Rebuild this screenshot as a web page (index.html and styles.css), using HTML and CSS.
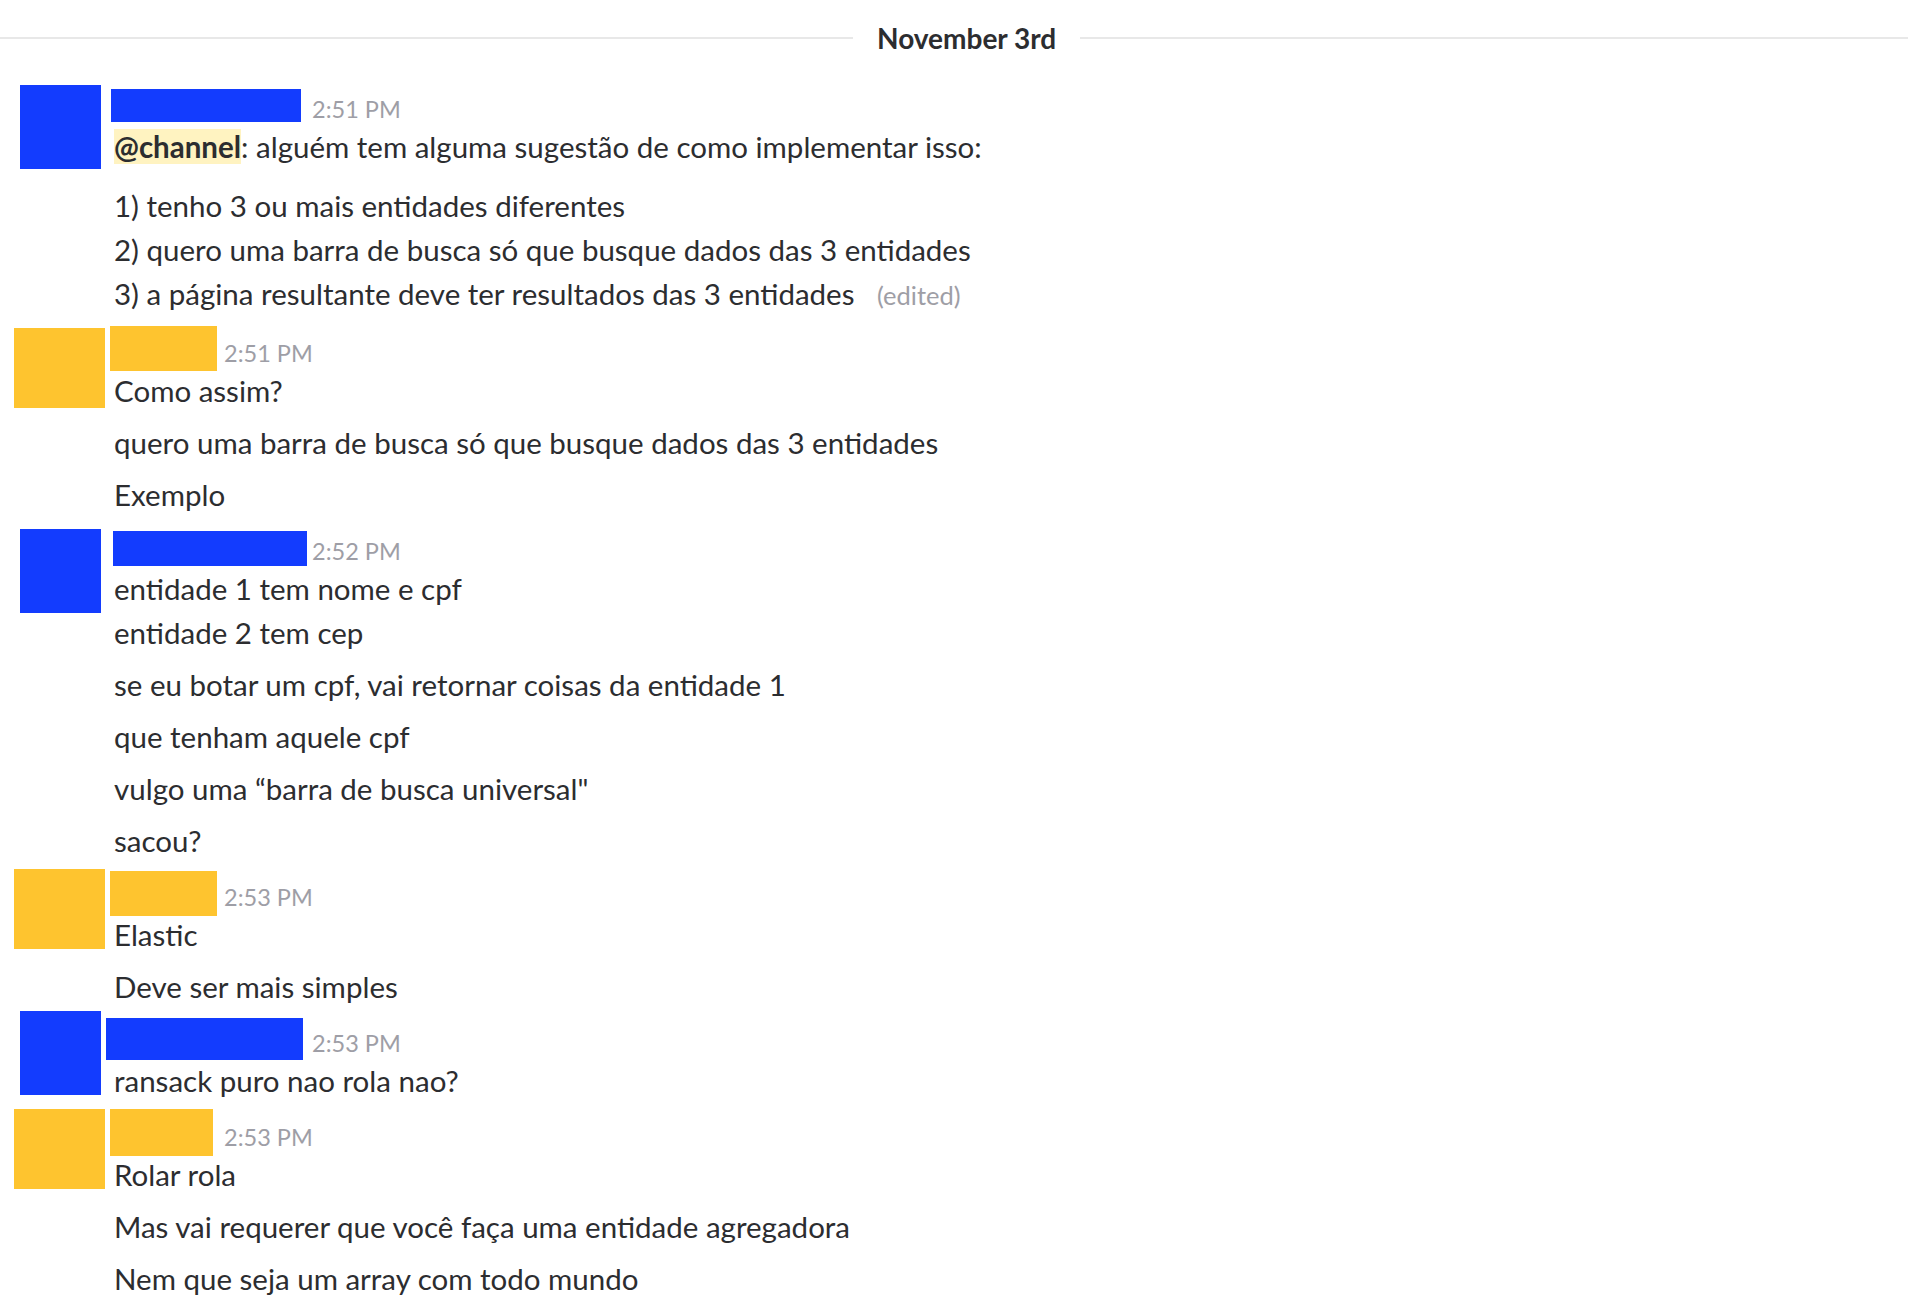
FILE: index.html
```html
<!DOCTYPE html>
<html lang="pt">
<head>
<meta charset="utf-8">
<title>November 3rd</title>
<link rel="stylesheet" href="styles.css">
</head>
<body>
<div class="chat">
  <div class="day-divider">
    <div class="rule rule-left"></div>
    <div class="day-label">November 3rd</div>
    <div class="rule rule-right"></div>
  </div>

  <div class="group g1">
    <div class="gutter"><div class="avatar blue av-1"></div></div>
    <div class="content">
      <div class="header">
        <div class="name name-blue"><div class="redact blue r-1"></div></div>
        <span class="time">2:51 PM</span>
      </div>
      <div class="msg"><span class="mention">@channel</span>: alguém tem alguma sugestão de como implementar isso:</div>
      <div class="msg para">1) tenho 3 ou mais entidades diferentes<br>2) quero uma barra de busca só que busque dados das 3 entidades<br>3) a página resultante deve ter resultados das 3 entidades <span class="edited">(edited)</span></div>
    </div>
  </div>

  <div class="group g2">
    <div class="gutter"><div class="avatar yellow av-2"></div></div>
    <div class="content">
      <div class="header">
        <div class="name name-yellow"><div class="redact yellow r-2"></div></div>
        <span class="time">2:51 PM</span>
      </div>
      <div class="msg">Como assim?</div>
      <div class="msg next">quero uma barra de busca só que busque dados das 3 entidades</div>
      <div class="msg next">Exemplo</div>
    </div>
  </div>

  <div class="group g3">
    <div class="gutter"><div class="avatar blue av-3"></div></div>
    <div class="content">
      <div class="header">
        <div class="name name-blue"><div class="redact blue r-3"></div></div>
        <span class="time">2:52 PM</span>
      </div>
      <div class="msg">entidade 1 tem nome e cpf<br>entidade 2 tem cep</div>
      <div class="msg next">se eu botar um cpf, vai retornar coisas da entidade 1</div>
      <div class="msg next">que tenham aquele cpf</div>
      <div class="msg next">vulgo uma “barra de busca universal"</div>
      <div class="msg next">sacou?</div>
    </div>
  </div>

  <div class="group g4">
    <div class="gutter"><div class="avatar yellow av-4"></div></div>
    <div class="content">
      <div class="header">
        <div class="name name-yellow"><div class="redact yellow r-4"></div></div>
        <span class="time">2:53 PM</span>
      </div>
      <div class="msg">Elastic</div>
      <div class="msg next">Deve ser mais simples</div>
    </div>
  </div>

  <div class="group g5">
    <div class="gutter"><div class="avatar blue av-5"></div></div>
    <div class="content">
      <div class="header">
        <div class="name name-blue"><div class="redact blue r-5"></div></div>
        <span class="time">2:53 PM</span>
      </div>
      <div class="msg">ransack puro nao rola nao?</div>
    </div>
  </div>

  <div class="group g6">
    <div class="gutter"><div class="avatar yellow av-6"></div></div>
    <div class="content">
      <div class="header">
        <div class="name name-yellow"><div class="redact yellow r-6"></div></div>
        <span class="time">2:53 PM</span>
      </div>
      <div class="msg">Rolar rola</div>
      <div class="msg next">Mas vai requerer que você faça uma entidade agregadora</div>
      <div class="msg next">Nem que seja um array com todo mundo</div>
    </div>
  </div>
</div>
</body>
</html>
```

FILE: styles.css
```css
html, body {
  margin: 0;
  padding: 0;
  background: #ffffff;
}

body {
  font-family: Lato, "Open Sans", sans-serif;
  color: #2c2d30;
  width: 1908px;
  height: 1312px;
  overflow: hidden;
}

.chat {
  display: flex;
  flex-direction: column;
}

/* day divider */
.day-divider {
  display: flex;
  align-items: center;
  height: 76px;
  margin-bottom: 8px;
}

.rule {
  height: 2px;
  background: #e8e8e8;
}

.rule-left {
  flex: 0 0 853px;
}

.rule-right {
  flex: 1 1 auto;
}

.day-label {
  font-weight: 700;
  font-size: 28px;
  line-height: 34px;
  padding: 0 24px;
  color: #2c2d30;
}

/* message groups */
.group {
  display: flex;
  align-items: flex-start;
  margin-bottom: 9px;
}

.g1 {
  margin-bottom: 11px;
}

.gutter {
  flex: 0 0 112px;
  height: 1px;
}

.avatar {
  width: 81px;
  height: 84px;
  margin-left: 20px;
}

.avatar.yellow {
  width: 91px;
  height: 80px;
  margin-left: 14px;
}

.blue {
  background: #133cfe;
}

.yellow {
  background: #fec42f;
}

.av-1 { margin-top: 1px; }
.av-2 { margin-top: 0; }
.av-3 { margin-top: 3px; }
.av-4 { margin-top: -3px; }
.av-5 { margin-top: -7px; }
.av-6 { margin-top: -3px; margin-left: 15px; height: 79px; }

.content {
  flex: 1 1 auto;
  min-width: 0;
}

.header {
  display: flex;
  align-items: flex-start;
  height: 41px;
}

.name {
  position: relative;
  height: 34px;
}

.name-blue { flex: 0 0 200px; }
.name-yellow { flex: 0 0 112px; }

/* redaction boxes drawn over the names */
.redact {
  position: absolute;
}

.r-1 { left: -1px; top: 5px; width: 190px; height: 33px; }
.r-2 { left: -2px; top: -2px; width: 107px; height: 45px; }
.r-3 { left: 1px; top: 5px; width: 194px; height: 35px; }
.r-4 { left: -2px; top: -1px; width: 107px; height: 45px; }
.r-5 { left: -6px; top: 0; width: 197px; height: 42px; }
.r-6 { left: -2px; top: -3px; width: 103px; height: 47px; }

.time {
  font-size: 23.5px;
  line-height: 30px;
  margin-top: 10px;
  color: #9e9ea6;
}

.msg {
  font-size: 29.5px;
  line-height: 44px;
  padding-left: 2px;
}

.msg.next {
  margin-top: 8px;
}

.msg.para {
  margin-top: 15px;
}

.mention {
  font-weight: 700;
  background: #fff3c1;
}

.edited {
  font-size: 25.5px;
  color: #9e9ea6;
  margin-left: 15px;
}
```
